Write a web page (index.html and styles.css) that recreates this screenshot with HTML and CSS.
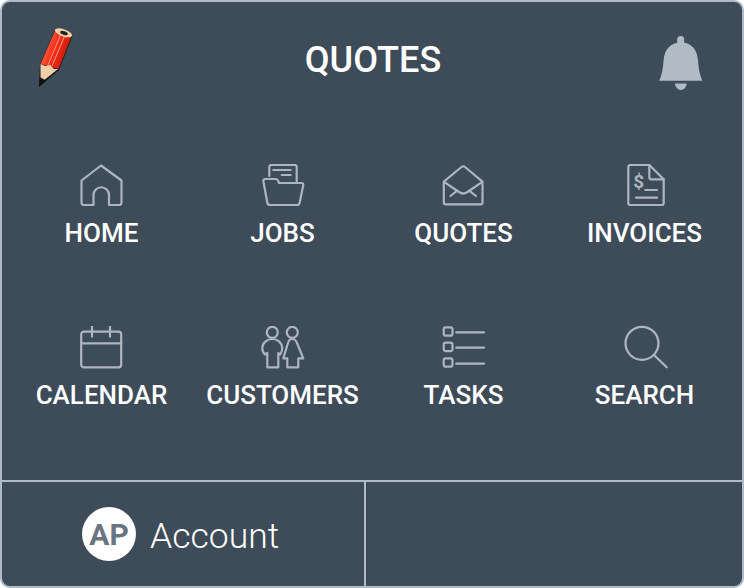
FILE: index.html
```html
<!DOCTYPE html>
<html lang="en">
<head>
  <meta charset="UTF-8">
  <title>Quotes</title>
  <link rel="stylesheet" href="styles.css">
</head>
<body>
  <div class="panel">
    <header class="top">
      <svg class="pencil" width="40" height="62" viewBox="0 0 40 62">
        <defs>
          <linearGradient id="red" x1="0" y1="0" x2="1" y2="0.45">
            <stop offset="0" stop-color="#ee2f1a"/>
            <stop offset="0.35" stop-color="#ff5238"/>
            <stop offset="0.55" stop-color="#f82e18"/>
            <stop offset="1" stop-color="#c01a0c"/>
          </linearGradient>
        </defs>
        <path d="M2 59 L3 36 L18 2 L35.500 8 L22 42 Z" fill="#1a1a1a"/>
        <path d="M3.500 36 L18.200 2.500 L34.500 8.500 L21.500 41 Z" fill="url(#red)"/>
        <path d="M3.500 36 L8 38 L13 37 L17 41 L21 41 L3.500 55 Z" fill="#efcfa8"/>
        <path d="M2 59 L2.700 49 L9 52.500 Z" fill="#111"/>
        <path d="M11 37 L24 6 M15 38 L28 7" stroke="#ff9a84" stroke-width="1" fill="none"/>
        <ellipse cx="26.500" cy="4.800" rx="9" ry="3.600" transform="rotate(20 26.500 4.800)" fill="#efcfa8"/>
        <ellipse cx="27" cy="5" rx="4" ry="1.800" transform="rotate(20 27 5)" fill="#222"/>
      </svg>
      <h1 class="title">QUOTES</h1>
      <svg class="bell" width="44" height="54" viewBox="0 0 44 54" fill="#b0bbc6">
        <rect x="18.200" y="0" width="7" height="10" rx="3.500"/>
        <path d="M22 6.500 C11 6.500 5.500 14 4.600 24 C4 33 3 38 0.300 44.700 H43.300 C40.600 38 39.600 33 39 24 C38 14 33 6.500 22 6.500 Z"/>
        <path d="M16 47.500 H27.700 C27.500 51 25 54 21.800 54 C18.700 54 16.200 51 16 47.500 Z"/>
      </svg>
    </header>

    <nav class="menu">
      <a class="item">
        <svg class="icon" viewBox="0 0 44 44">
          <path d="M21 1.500 L1.500 16.500 V38.500 Q1.500 41 4 41 H13.500 V31 A7.750 7.750 0 0 1 29 31 V41 H39 Q41.500 41 41.500 38.500 V16.500 Z"/>
        </svg>
        <span class="label">HOME</span>
      </a>
      <a class="item">
        <svg class="icon" viewBox="0 0 44 44">
          <path d="M8.300 12 V3 Q8.300 1 10.300 1 H33.700 Q35.700 1 35.700 3 V17"/>
          <path d="M12.300 6 H29.700 M20.700 11 H29.700"/>
          <path d="M2.300 17 Q2.300 15 4.300 15 H15 Q16.500 15 17 16.500 L18 19 H40.500 Q42.500 19 42.300 21 L38.700 38.500 Q38.300 41 36 41 H9 Q6.700 41 6.300 38.500 Z"/>
        </svg>
        <span class="label">JOBS</span>
      </a>
      <a class="item">
        <svg class="icon" viewBox="0 0 44 44">
          <path d="M1.800 17.700 L19.500 3 Q21.200 1.600 23 3 L40.500 17.700 V38.500 Q40.500 40.300 38.700 40.300 H3.600 Q1.800 40.300 1.800 38.500 Z"/>
          <path d="M2.800 18.300 L17 28 Q21.200 31 25.500 28 L39.500 18.300"/>
          <path d="M8.500 32 L15.200 26.700 M27.200 26.700 L33.900 32"/>
        </svg>
        <span class="label">QUOTES</span>
      </a>
      <a class="item">
        <svg class="icon" viewBox="0 0 44 44">
          <path d="M26.300 1 H7.300 Q5.300 1 5.300 3 V39 Q5.300 41 7.300 41 H38.700 Q40.700 41 40.700 39 V15.300 Z"/>
          <path d="M26.300 1 V13.300 Q26.300 15.300 28.300 15.300 H40.700"/>
          <path d="M22.300 26 H34 M13 33.700 H34"/>
          <text class="dollar" x="15.700" y="23.500">$</text>
        </svg>
        <span class="label">INVOICES</span>
      </a>
      <a class="item">
        <svg class="icon" viewBox="0 0 44 44">
          <rect x="1.200" y="5.700" width="40" height="35.600" rx="2.500"/>
          <path d="M1.200 17.300 H41.200 M12 0.700 V10.700 M30 0.700 V10.700"/>
        </svg>
        <span class="label">CALENDAR</span>
      </a>
      <a class="item">
        <svg class="icon" viewBox="0 0 44 44">
          <circle cx="11.300" cy="6.300" r="5.500"/>
          <circle cx="31.300" cy="6.300" r="5.500"/>
          <path d="M6.300 27 V41.300 H17.300 V27 L19 28.500 Q21.500 25 21.300 22 C21 17 17 13 11.300 13 C6 13 1.300 17 1.300 22 Q1.300 26 4 28.500 Z"/>
          <path d="M26.300 41.300 V32.300 H22.300 L27 17 Q28 13 31.300 13 Q34.500 13 36 17 L42.300 32.300 H37.300 V41.300 Z"/>
        </svg>
        <span class="label">CUSTOMERS</span>
      </a>
      <a class="item">
        <svg class="icon" viewBox="0 0 44 44">
          <rect x="1.700" y="1.300" width="8.800" height="8.400" rx="2"/>
          <rect x="1.700" y="16.700" width="8.800" height="8.400" rx="2"/>
          <rect x="1.700" y="32.300" width="8.800" height="8.400" rx="2"/>
          <path d="M14.200 6.300 H42 M14.200 21.700 H42 M14.200 37.700 H42"/>
        </svg>
        <span class="label">TASKS</span>
      </a>
      <a class="item">
        <svg class="icon icon-wide" viewBox="0 0 44 44">
          <circle cx="19" cy="17.300" r="16.500"/>
          <path d="M31 29 L43.700 41.300"/>
        </svg>
        <span class="label">SEARCH</span>
      </a>
    </nav>

    <footer class="bottom">
      <a class="account">
        <span class="avatar">AP</span>
        <span class="account-name">Account</span>
      </a>
      <div class="bottom-empty"></div>
    </footer>
  </div>
</body>
</html>
```

FILE: styles.css
```css
* {
  box-sizing: border-box;
}
body {
  margin: 0;
  background: #fff;
  font-family: Roboto, Arial, sans-serif;
}
.panel {
  width: 744px;
  height: 588px;
  display: flex;
  flex-direction: column;
  background: #3e4b59;
  border: 2px solid #b0bbc6;
  border-radius: 10px;
  overflow: hidden;
  color: #fff;
}
.top {
  height: 162px;
  padding: 26px 39px 0 35px;
  display: grid;
  grid-template-columns: 1fr auto 1fr;
  align-items: start;
}
.pencil {
  display: block;
}
.title {
  margin: 10px 0 0 6px;
  font-size: 36px;
  line-height: 44px;
  font-weight: 500;
}
.bell {
  display: block;
  justify-self: end;
  margin-top: 8px;
}
.menu {
  padding-left: 9px;
  display: grid;
  grid-template-columns: repeat(4, 181px);
  row-gap: 79px;
}
.item {
  height: 83px;
  display: flex;
  flex-direction: column;
  align-items: center;
}
.icon {
  display: block;
  width: 44px;
  height: 44px;
  fill: none;
  stroke: #adb5c0;
  stroke-width: 2.2;
  stroke-linejoin: round;
  stroke-linecap: round;
}
.icon-wide {
  overflow: visible;
}
.dollar {
  fill: #adb5c0;
  stroke: none;
  font-size: 19px;
  font-weight: 700;
  text-anchor: middle;
}
.label {
  margin-top: 11px;
  font-size: 26px;
  line-height: 28px;
  font-weight: 500;
  white-space: nowrap;
}
.bottom {
  margin-top: auto;
  height: 106px;
  display: grid;
  grid-template-columns: 364px 1fr;
  border-top: 2px solid #b0bbc6;
}
.account {
  padding-left: 80px;
  border-right: 2px solid #b0bbc6;
  display: flex;
  align-items: center;
  gap: 14px;
}
.avatar {
  width: 54px;
  height: 54px;
  border-radius: 50%;
  background: #fff;
  color: #6b7580;
  font-size: 30px;
  font-weight: 700;
  display: flex;
  align-items: center;
  justify-content: center;
}
.account-name {
  padding-top: 4px;
  font-size: 35.5px;
  font-weight: 300;
}
```
